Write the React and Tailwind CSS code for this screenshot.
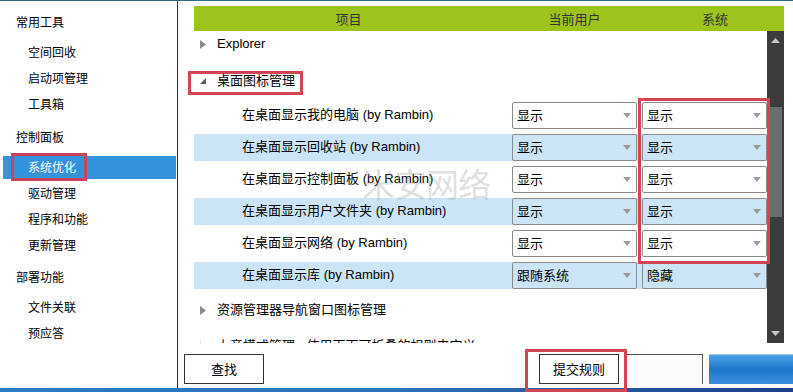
import React from "react";

const FONT = { fontFamily: '"Liberation Sans","Noto Sans CJK SC",sans-serif' };
const CJK = { fontFamily: '"Noto Sans CJK SC",sans-serif' };

function Collapsed() {
  return (
    <svg width="6" height="9" viewBox="0 0 6 9" className="shrink-0">
      <polygon points="0,0 6,4.5 0,9" fill="#8c8c8c" />
    </svg>
  );
}
function Expanded() {
  return (
    <svg width="6" height="6" viewBox="0 0 6 6" className="shrink-0">
      <polygon points="6,0 6,6 0,6" fill="#5a5a5a" />
    </svg>
  );
}
function DropArrow() {
  return (
    <svg width="8" height="5" viewBox="0 0 8 5" className="shrink-0">
      <polygon points="0,0 8,0 4,5" fill="#9a9a9a" />
    </svg>
  );
}

function Select({ value }) {
  return (
    <div className="w-[125px] h-[27px] border border-[#8a8a8a] rounded-[2px] flex items-center justify-between pl-[4px] pr-[5px] text-[13px] text-black" style={CJK}>
      <span>{value}</span>
      <DropArrow />
    </div>
  );
}

const sidebar = [
  { h: "常用工具", mt: "mt-0", items: ["空间回收", "启动项管理", "工具箱"] },
  { h: "控制面板", mt: "mt-[7px]", items: ["系统优化", "驱动管理", "程序和功能", "更新管理"] },
  { h: "部署功能", mt: "mt-[6px]", items: ["文件关联", "预应答"] },
];

const rows = [
  { t: "在桌面显示我的电脑", u: "显示", s: "显示" },
  { t: "在桌面显示回收站", u: "显示", s: "显示" },
  { t: "在桌面显示控制面板", u: "显示", s: "显示" },
  { t: "在桌面显示用户文件夹", u: "显示", s: "显示" },
  { t: "在桌面显示网络", u: "显示", s: "显示" },
  { t: "在桌面显示库", u: "跟随系统", s: "隐藏" },
];

export default function App() {
  return (
    <div className="relative w-[793px] h-[392px] overflow-hidden bg-white border-t border-[#2f6d86] flex flex-col" style={FONT}>
      <div className="flex flex-1 min-h-0">
        {/* Sidebar */}
        <div className="w-[178px] shrink-0 border-r border-[#2b2b2b] pt-[8px] text-[12px] text-black" style={CJK}>
          {sidebar.map((sec) => (
            <div key={sec.h} className={sec.mt}>
              <div className="h-[26px] flex items-center pl-[16px] mb-[4px]">{sec.h}</div>
              {sec.items.map((it) => {
                const sel = it === "系统优化";
                return (
                  <div key={it} className="relative h-[26px] flex items-center pl-[3px] pr-[1px]">
                    <div className={"w-full h-[23px] flex items-center pl-[25px] " + (sel ? "bg-[#3393dc] text-white" : "")}>{it}</div>
                    {sel && <div className="absolute left-[11px] top-[-1px] w-[76px] h-[28px] border-[3px] border-[#c9435a]" />}
                  </div>
                );
              })}
            </div>
          ))}
        </div>

        {/* Main */}
        <div className="flex-1 flex flex-col pt-[5px]">
          <div className="ml-[16px] mr-[9px] h-[25px] bg-[#9cc41c] flex items-center text-[13px] text-[#333]" style={CJK}>
            <div className="w-[309px] text-center">项目</div>
            <div className="w-[143px] text-center">当前用户</div>
            <div className="flex-1 text-center">系统</div>
          </div>
          <div className="ml-[16px] mr-[9px] h-[312px] flex">
            <div className="flex-1 overflow-hidden text-[13px] text-black">
              <div className="h-[26px] flex items-center pl-[6px] gap-[11px]">
                <Collapsed />
                <span>Explorer</span>
              </div>
              <div className="mt-[11px] h-[26px] flex items-center pl-[6px] gap-[11px]">
                <Expanded />
                <span>桌面图标管理</span>
              </div>
              <div className="mt-[5px]">
                {rows.map((r, i) => (
                  <div key={r.t} className="h-[32px] flex items-center">
                    <div className={"w-full h-[27px] flex items-center gap-[5px] " + (i % 2 === 1 ? "bg-[#cce5f6]" : "")}>
                      <div className="flex-1 pl-[48px] whitespace-nowrap">{r.t} (by Rambin)</div>
                      <Select value={r.u} />
                      <Select value={r.s} />
                    </div>
                  </div>
                ))}
              </div>
              <div className="mt-[6px] h-[26px] flex items-center pl-[6px] gap-[11px]">
                <Collapsed />
                <span>资源管理器导航窗口图标管理</span>
              </div>
              <div className="mt-[10px] h-[26px] flex items-center pl-[6px] gap-[11px] whitespace-nowrap">
                <Collapsed />
                <span>上帝模式管理 - 使用下面可折叠的规则来定义</span>
              </div>
            </div>
            {/* Scrollbar */}
            <div className="w-[17px] bg-[#3c3c3e] flex flex-col items-center">
              <svg width="9" height="5" viewBox="0 0 9 5" className="mt-[7px]">
                <polygon points="0,5 9,5 4.5,0" fill="#c8c8c8" />
              </svg>
              <div className="mt-[64px] w-[13px] h-[110px] bg-[#6d6d6d]" />
              <div className="flex-1" />
              <svg width="9" height="5" viewBox="0 0 9 5" className="mb-[7px]">
                <polygon points="0,0 9,0 4.5,5" fill="#c8c8c8" />
              </svg>
            </div>
          </div>
          {/* Bottom buttons */}
          <div className="flex-1 flex items-start pt-[11px] pl-[6px] text-[13px]" style={CJK}>
            <div className="w-[80px] h-[30px] border border-[#333] flex items-center justify-center bg-white">查找</div>
            <div className="ml-[275px] w-[80px] h-[30px] border border-[#333] flex items-center justify-center bg-white">提交规则</div>
            <div className="ml-[7px] w-[77px] h-[30px] border-t border-r border-[#555] bg-[#fbfbfb]" />
            <div className="ml-[6px] w-[84px] h-[30px] bg-gradient-to-b from-[#4aa2e6] via-[#1f76cc] to-[#3a8fe0] border-t border-[#9cc8ee]" />
          </div>
        </div>
      </div>
      <div className="h-[4px] shrink-0 bg-gradient-to-r from-[#2a79c2] via-[#2c74bc] to-[#1d3f8a]" />

      {/* Watermark */}
      <div className="absolute left-[362px] top-[158px] text-[33px] text-[#9a9a9a] opacity-30 pointer-events-none tracking-[-1px]" style={CJK}>
        米安网络
      </div>

      {/* Red highlight boxes */}
      <div className="absolute left-[188px] top-[70px] w-[115px] h-[24px] border-[3px] border-[#d24552] pointer-events-none" />
      <div className="absolute left-[638px] top-[97px] w-[132px] h-[166px] border-[3px] border-[#d24552] pointer-events-none" />
      <div className="absolute left-[525px] top-[348px] w-[102px] h-[43px] border-[3px] border-[#d24552] pointer-events-none" />
    </div>
  );
}
